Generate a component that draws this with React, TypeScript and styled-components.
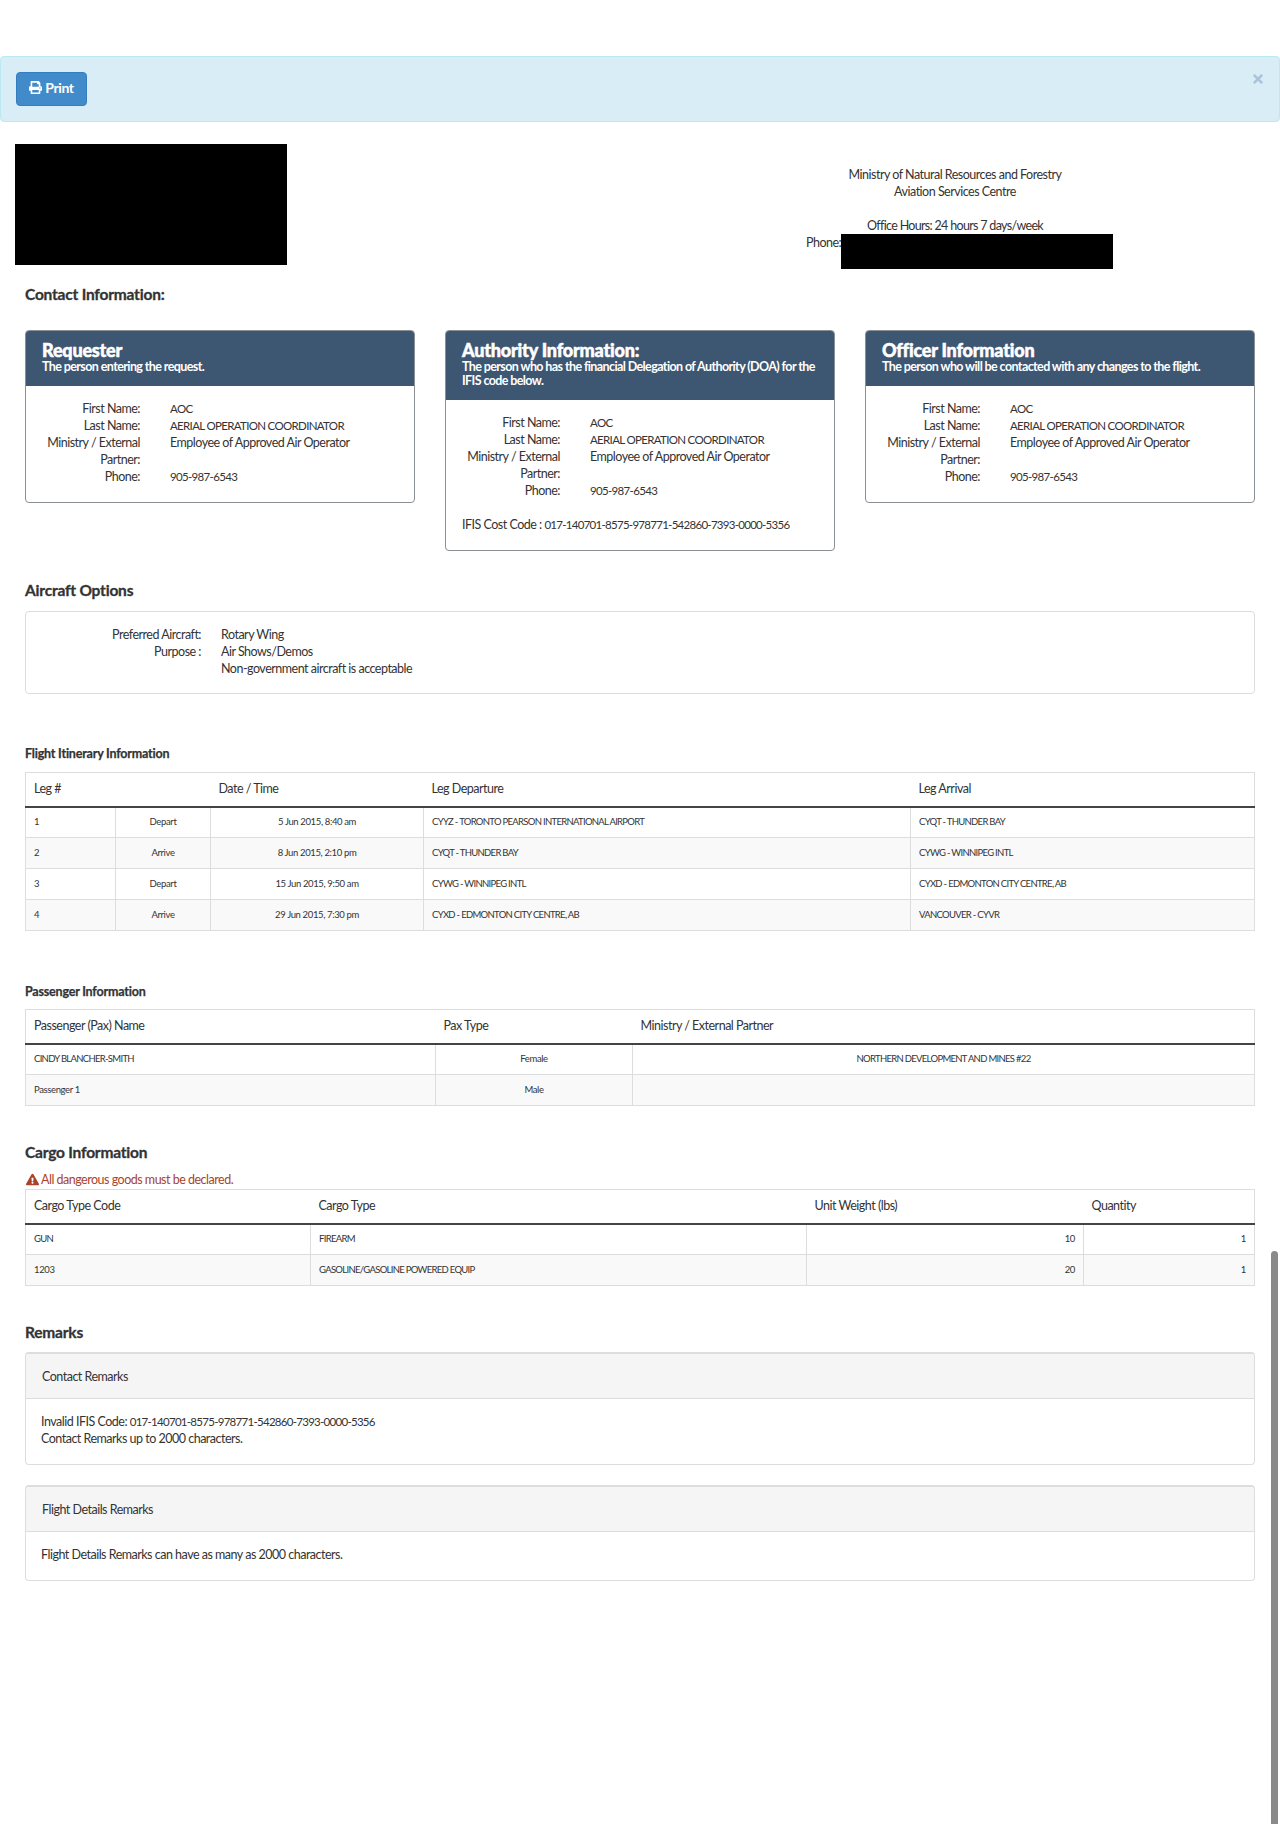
import React from "react";
import styled, { createGlobalStyle, css } from "styled-components";
import { FaPrint, FaTimes, FaExclamationTriangle } from "react-icons/fa";

const Global = createGlobalStyle`
  html, body { margin: 0; padding: 0; background: #fff; }
  body { font-family: Lato, "Noto Sans", sans-serif; font-size: 12.5px; line-height: 17px; color: #333; letter-spacing: -0.5px; }
  * { box-sizing: border-box; }
`;

const tightCaps = css`
  font-size: 11.5px;
  letter-spacing: -0.67px;
`;

const Page = styled.div`
  position: relative;
  height: 1824px;
  overflow: hidden;
  padding-top: 56px;
`;
const Scrollbar = styled.div`
  position: absolute;
  right: 2px;
  top: 1251px;
  bottom: 0;
  width: 7px;
  border-radius: 4px 4px 0 0;
  background: #8a8a8a;
`;
const Alert = styled.div`
  position: relative;
  height: 66px;
  padding: 15px;
  background: #d9edf7;
  border: 1px solid #bce8f1;
  border-radius: 4px;
`;
const PrintButton = styled.button`
  display: inline-flex;
  align-items: center;
  gap: 3px;
  width: 71px;
  height: 34px;
  justify-content: center;
  padding: 0 0 4px;
  background: #428bca;
  border: 1px solid #357ebd;
  border-radius: 4px;
  color: #fff;
  font: 700 14px/17px Lato, sans-serif;
  letter-spacing: -0.4px;
`;
const CloseIcon = styled.span`
  position: absolute;
  right: 14px;
  top: 15px;
  color: #a9c4da;
  font-size: 14px;
  line-height: 14px;
`;
const Masthead = styled.header`
  display: grid;
  grid-template-columns: 640px 630px;
  margin-top: 22px;
  height: 121px;
`;
const Logo = styled.div`
  width: 272px;
  height: 121px;
  margin-left: 15px;
  background: #000;
`;
const Office = styled.div`
  padding-top: 22px;
  text-align: center;
`;
const OfficeHours = styled.div`
  letter-spacing: -0.68px;
`;
const PhoneLine = styled.div`
  position: relative;
  text-align: left;
  padding-left: 166px;
`;
const Redaction = styled.span`
  position: absolute;
  left: 201px;
  top: 0;
  width: 272px;
  height: 35px;
  background: #000;
`;
const Content = styled.main`
  padding: 0 25px;
`;
const SectionTitle = styled.h2<{ $top: number }>`
  margin: ${(p) => p.$top}px 0 0;
  font-size: 15.5px;
  line-height: 20px;
  font-weight: 700;
  letter-spacing: -0.2px;
  color: #333;
  -webkit-text-stroke: 0.3px #333;
`;
const SmallTitle = styled.h3<{ $top: number; $bottom: number }>`
  margin: ${(p) => p.$top}px 0 ${(p) => p.$bottom}px;
  font-size: 12.5px;
  line-height: 18px;
  font-weight: 700;
  letter-spacing: -0.2px;
  color: #333;
  -webkit-text-stroke: 0.25px #333;
`;
const Cards = styled.div`
  display: flex;
  align-items: flex-start;
  gap: 30px;
  margin-top: 26px;
`;
const Card = styled.section`
  width: 390px;
  border: 1px solid #8a8f94;
  border-radius: 4px;
  overflow: hidden;
`;
const CardHead = styled.div`
  background: #3d5671;
  color: #fff;
  padding: 10px 8px 12px 16px;
`;
const CardTitle = styled.div`
  font-size: 18px;
  line-height: 18px;
  font-weight: 900;
  letter-spacing: -0.2px;
  -webkit-text-stroke: 0.5px #fff;
`;
const CardSub = styled.div`
  margin-top: 1px;
  font-size: 12.5px;
  line-height: 14px;
  font-weight: 700;
  letter-spacing: -0.6px;
`;
const CardBody = styled.div`
  padding: 14px 16px 17px;
`;
const Fields = styled.dl<{ $label: number; $gap: number; $left: number }>`
  display: grid;
  grid-template-columns: ${(p) => p.$label}px 1fr;
  column-gap: ${(p) => p.$gap}px;
  margin: 0;
  padding-left: ${(p) => p.$left}px;
`;
const FieldLabel = styled.dt`
  text-align: right;
`;
const FieldValue = styled.dd<{ $caps?: boolean }>`
  margin: 0;
  min-height: 17px;
  ${(p) => p.$caps && tightCaps}
`;
const CodeText = styled.span`
  font-size: 11.5px;
  letter-spacing: -0.72px;
`;
const CostCode = styled.div`
  margin-top: 17px;
`;
const OptionsPanel = styled.section`
  height: 83px;
  margin-top: 11px;
  padding: 14px 0 0;
  border: 1px solid #ddd;
  border-radius: 4px;
`;
const Table = styled.table`
  width: 1229px;
  table-layout: fixed;
  border-collapse: collapse;
  border: 1px solid #ddd;
`;
const Col = styled.col<{ $w: number }>`
  width: ${(p) => p.$w}px;
`;
const Th = styled.th`
  height: 34px;
  padding: 0 8px 2px;
  text-align: left;
  font-weight: 400;
  border-bottom: 2px solid #444;
`;
const Row = styled.tr`
  &:nth-child(even) { background: #f9f9f9; }
`;
const Td = styled.td<{ $align?: string; $caps?: boolean }>`
  height: 31px;
  padding: 0 8px 2px;
  font-size: 9.5px;
  letter-spacing: ${(p) => (p.$caps ? "-0.7px" : "-0.37px")};
  border: 1px solid #ddd;
  text-align: ${(p) => p.$align || "left"};
`;
const Warning = styled.div`
  display: flex;
  align-items: center;
  gap: 2px;
  margin: 9px 0 1px;
  color: #a9442a;
  padding-left: 1px;
`;
const RemarkPanel = styled.section<{ $top: number }>`
  margin-top: ${(p) => p.$top}px;
  border: 1px solid #ddd;
  border-top-width: 2px;
  border-radius: 4px;
  overflow: hidden;
`;
const RemarkHead = styled.div`
  height: 45px;
  display: flex;
  align-items: center;
  padding: 0 16px;
  background: #f5f5f5;
  border-bottom: 1px solid #ddd;
`;
const RemarkBody = styled.div`
  padding: 14px 15px 17px;
`;

const PersonFields = () => (
  <Fields $label={95} $gap={30} $left={3}>
    <FieldLabel>First Name:</FieldLabel>
    <FieldValue $caps>AOC</FieldValue>
    <FieldLabel>Last Name:</FieldLabel>
    <FieldValue $caps>AERIAL OPERATION COORDINATOR</FieldValue>
    <FieldLabel>Ministry / External Partner:</FieldLabel>
    <FieldValue>Employee of Approved Air Operator</FieldValue>
    <FieldLabel>Phone:</FieldLabel>
    <FieldValue $caps>905-987-6543</FieldValue>
  </Fields>
);

const legs = [
  ["1", "Depart", "5 Jun 2015, 8:40 am", "CYYZ - TORONTO PEARSON INTERNATIONAL AIRPORT", "CYQT - THUNDER BAY"],
  ["2", "Arrive", "8 Jun 2015, 2:10 pm", "CYQT - THUNDER BAY", "CYWG - WINNIPEG INTL"],
  ["3", "Depart", "15 Jun 2015, 9:50 am", "CYWG - WINNIPEG INTL", "CYXD - EDMONTON CITY CENTRE, AB"],
  ["4", "Arrive", "29 Jun 2015, 7:30 pm", "CYXD - EDMONTON CITY CENTRE, AB", "VANCOUVER - CYVR"],
];

export default function App() {
  return (
    <Page>
      <Global />
      <Alert>
        <PrintButton>
          <FaPrint size={13} />
          Print
        </PrintButton>
        <CloseIcon>
          <FaTimes />
        </CloseIcon>
      </Alert>
      <Masthead>
        <Logo />
        <Office>
          <div>Ministry of Natural Resources and Forestry</div>
          <div>Aviation Services Centre</div>
          <br />
          <OfficeHours>Office Hours: 24 hours 7 days/week</OfficeHours>
          <PhoneLine>
            Phone:
            <Redaction />
          </PhoneLine>
        </Office>
      </Masthead>
      <Content>
        <SectionTitle $top={19}>Contact Information:</SectionTitle>
        <Cards>
          <Card>
            <CardHead>
              <CardTitle>Requester</CardTitle>
              <CardSub>The person entering the request.</CardSub>
            </CardHead>
            <CardBody>
              <PersonFields />
            </CardBody>
          </Card>
          <Card>
            <CardHead>
              <CardTitle>Authority Information:</CardTitle>
              <CardSub>
                The person who has the financial Delegation of Authority (DOA) for the IFIS code below.
              </CardSub>
            </CardHead>
            <CardBody>
              <PersonFields />
              <CostCode>
                IFIS Cost Code : <CodeText>017-140701-8575-978771-542860-7393-0000-5356</CodeText>
              </CostCode>
            </CardBody>
          </Card>
          <Card>
            <CardHead>
              <CardTitle>Officer Information</CardTitle>
              <CardSub>The person who will be contacted with any changes to the flight.</CardSub>
            </CardHead>
            <CardBody>
              <PersonFields />
            </CardBody>
          </Card>
        </Cards>

        <SectionTitle $top={29}>Aircraft Options</SectionTitle>
        <OptionsPanel>
          <Fields $label={120} $gap={20} $left={55}>
            <FieldLabel>Preferred Aircraft:</FieldLabel>
            <FieldValue>Rotary Wing</FieldValue>
            <FieldLabel>Purpose :</FieldLabel>
            <FieldValue>Air Shows/Demos</FieldValue>
            <FieldLabel />
            <FieldValue>Non-government aircraft is acceptable</FieldValue>
          </Fields>
        </OptionsPanel>

        <SmallTitle $top={51} $bottom={9}>Flight Itinerary Information</SmallTitle>
        <Table>
          <colgroup>
            <Col $w={90} />
            <Col $w={95} />
            <Col $w={213} />
            <Col $w={487} />
            <Col $w={344} />
          </colgroup>
          <thead>
            <tr>
              <Th colSpan={2}>Leg #</Th>
              <Th>Date / Time</Th>
              <Th>Leg Departure</Th>
              <Th>Leg Arrival</Th>
            </tr>
          </thead>
          <tbody>
            {legs.map((l) => (
              <Row key={l[0]}>
                <Td>{l[0]}</Td>
                <Td $align="center">{l[1]}</Td>
                <Td $align="center">{l[2]}</Td>
                <Td $caps>{l[3]}</Td>
                <Td $caps>{l[4]}</Td>
              </Row>
            ))}
          </tbody>
        </Table>

        <SmallTitle $top={52} $bottom={8}>Passenger Information</SmallTitle>
        <Table>
          <colgroup>
            <Col $w={410} />
            <Col $w={197} />
            <Col $w={622} />
          </colgroup>
          <thead>
            <tr>
              <Th>Passenger (Pax) Name</Th>
              <Th>Pax Type</Th>
              <Th>Ministry / External Partner</Th>
            </tr>
          </thead>
          <tbody>
            <Row>
              <Td $caps>CINDY BLANCHER-SMITH</Td>
              <Td $align="center">Female</Td>
              <Td $align="center" $caps>NORTHERN DEVELOPMENT AND MINES #22</Td>
            </Row>
            <Row>
              <Td>Passenger 1</Td>
              <Td $align="center">Male</Td>
              <Td />
            </Row>
          </tbody>
        </Table>

        <SectionTitle $top={36}>Cargo Information</SectionTitle>
        <Warning>
          <FaExclamationTriangle size={13} />
          All dangerous goods must be declared.
        </Warning>
        <Table>
          <colgroup>
            <Col $w={285} />
            <Col $w={496} />
            <Col $w={277} />
            <Col $w={171} />
          </colgroup>
          <thead>
            <tr>
              <Th>Cargo Type Code</Th>
              <Th>Cargo Type</Th>
              <Th>Unit Weight (lbs)</Th>
              <Th>Quantity</Th>
            </tr>
          </thead>
          <tbody>
            <Row>
              <Td $caps>GUN</Td>
              <Td $caps>FIREARM</Td>
              <Td $align="right">10</Td>
              <Td $align="right">1</Td>
            </Row>
            <Row>
              <Td>1203</Td>
              <Td $caps>GASOLINE/GASOLINE POWERED EQUIP</Td>
              <Td $align="right">20</Td>
              <Td $align="right">1</Td>
            </Row>
          </tbody>
        </Table>

        <SectionTitle $top={36}>Remarks</SectionTitle>
        <RemarkPanel $top={10}>
          <RemarkHead>Contact Remarks</RemarkHead>
          <RemarkBody>
            <div>
              Invalid IFIS Code: <CodeText>017-140701-8575-978771-542860-7393-0000-5356</CodeText>
            </div>
            <div>Contact Remarks up to 2000 characters.</div>
          </RemarkBody>
        </RemarkPanel>
        <RemarkPanel $top={20}>
          <RemarkHead>Flight Details Remarks</RemarkHead>
          <RemarkBody>Flight Details Remarks can have as many as 2000 characters.</RemarkBody>
        </RemarkPanel>
      </Content>
      <Scrollbar />
    </Page>
  );
}
